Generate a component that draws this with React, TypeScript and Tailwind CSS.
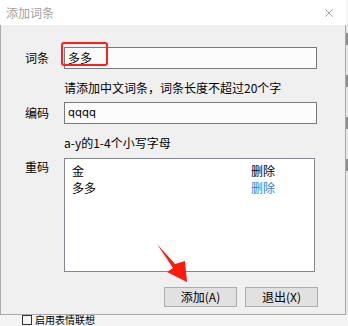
import { X } from "lucide-react";

const FONT = "font-['Microsoft_YaHei','Noto_Sans_CJK_SC',sans-serif]";

type Entry = { word: string; active?: boolean };

const duplicates: Entry[] = [{ word: "金" }, { word: "多多", active: true }];

function Arrow() {
  return (
    <svg
      className="absolute left-[155px] top-[242px]"
      width="36"
      height="44"
      viewBox="155 242 36 44"
    >
      <polygon
        points="157,244 175,264 185,261 187,282 167,272 173,268"
        fill="#ff1a0f"
      />
    </svg>
  );
}

export default function App() {
  return (
    <div className={`relative h-[326px] w-[348px] overflow-hidden bg-[#f4f4f4] ${FONT}`}>
      {/* dialog window */}
      <div className="flex w-[346px] flex-col">
        <div className="flex h-[25px] items-center justify-between bg-white pl-[6px] pr-[10px]">
          <span className="text-[12px] leading-none text-[#a0a0a0]">添加词条</span>
          <X className="h-[14px] w-[14px] text-[#808080]" strokeWidth={1.2} />
        </div>

        <div className="relative flex h-[290px] flex-col border-x border-b border-[#a9a9a9] bg-[#f0f0f0] pl-[24px] text-[12px] leading-[16px] text-black">
          {/* 词条 */}
          <div className="mt-[22px] flex items-center">
            <span className="w-[39px]">词条</span>
            <div className="relative">
              <div className="flex h-[22px] w-[253px] items-center border border-[#7a7a7a] bg-[#fcfcfc] pl-[3px]">
                多多
              </div>
              <div className="absolute left-[-3px] top-[-5px] h-[24px] w-[47px] rounded-[3px] border-2 border-[#ff1f1f]" />
            </div>
          </div>
          <p className="ml-[39px] mt-[11px]">请添加中文词条，词条长度不超过20个字</p>

          {/* 编码 */}
          <div className="mt-[6px] flex items-center">
            <span className="w-[39px]">编码</span>
            <div className="flex h-[22px] w-[253px] items-center border border-[#7a7a7a] bg-[#fcfcfc] pl-[3px] font-['Tahoma','DejaVu_Sans',sans-serif] text-[11px]">
              qqqq
            </div>
          </div>
          <p className="ml-[39px] mt-[11px]">a-y的1-4个小写字母</p>

          {/* 重码 */}
          <div className="mt-[7px] flex items-start">
            <span className="w-[39px] pt-[1px]">重码</span>
            <div className="h-[114px] w-[251px] border border-[#828790] bg-white pl-[7px] pt-[3px]">
              {duplicates.map((entry) => (
                <div key={entry.word} className="flex h-[17px] items-center">
                  <span className="w-[179px]">{entry.word}</span>
                  <span className={entry.active ? "text-[#2a7fd4]" : ""}>删除</span>
                </div>
              ))}
            </div>
          </div>

          <div className="mt-[15px] flex gap-[8px] pl-[139px]">
            <button className="h-[20px] w-[73px] border border-[#adadad] bg-[#e1e1e1] text-[12px]">
              添加(A)
            </button>
            <button className="h-[20px] w-[73px] border border-[#adadad] bg-[#e1e1e1] text-[12px]">
              退出(X)
            </button>
          </div>
        </div>
      </div>

      {/* background behind the dialog */}
      <div className="absolute right-0 top-[25px] flex h-[290px] w-[2px] flex-col gap-[30px] bg-[#e8e8e8] pt-[8px]">
        <div className="h-[12px] bg-[#8a8a8a]" />
        <div className="h-[12px] bg-[#8a8a8a]" />
        <div className="h-[12px] bg-[#8a8a8a]" />
        <div className="h-[12px] bg-[#8a8a8a]" />
      </div>
      <div className="absolute left-[22px] top-[315px] flex items-center gap-[3px] text-[10px] leading-[10px] text-black">
        <span className="h-[10px] w-[10px] border border-[#333]" />
        <span>启用表情联想</span>
      </div>

      <Arrow />
    </div>
  );
}
